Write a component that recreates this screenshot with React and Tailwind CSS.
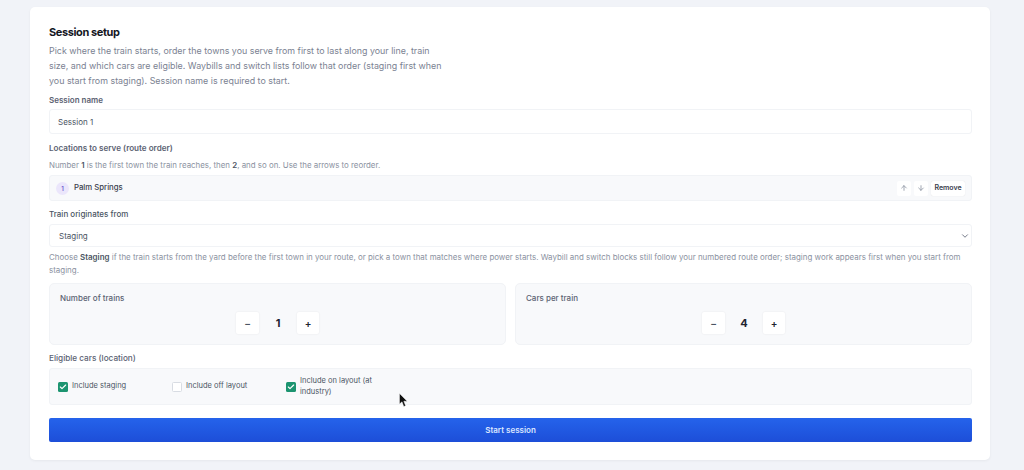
import { ChevronDown, ArrowUp, ArrowDown, Check } from "lucide-react";

function Stepper({ label, value }) {
  return (
    <div className="flex-1 h-[62px] bg-[#f8f9fb] border border-[#f1f3f6] rounded-[5px] px-[10px] pt-[8px]">
      <div className="text-[8px] leading-[12px] font-medium text-[#5b6272]">{label}</div>
      <div className="flex items-center justify-center mt-[8px]">
        <button className="w-[23px] h-[22px] bg-white rounded-[2px] shadow-[0_0_2px_rgba(0,0,0,0.08)] text-[10px] font-semibold text-[#4b5563]">−</button>
        <span className="w-[38px] text-center text-[11px] font-bold text-[#1f2430]">{value}</span>
        <button className="w-[22px] h-[22px] bg-white rounded-[2px] shadow-[0_0_2px_rgba(0,0,0,0.08)] text-[10px] font-semibold text-[#1f2430]">+</button>
      </div>
    </div>
  );
}

function Box({ checked }) {
  return checked ? (
    <span className="w-[10px] h-[10px] shrink-0 rounded-[1.5px] bg-[#1c9470] flex items-center justify-center">
      <Check size={8} strokeWidth={3.5} className="text-white" />
    </span>
  ) : (
    <span className="w-[10px] h-[10px] shrink-0 rounded-[1.5px] bg-white border border-[#d8dce3]"></span>
  );
}

export default function App() {
  return (
    <div className="relative w-[1024px] h-[470px] overflow-hidden bg-[#f1f3f8] pt-[7px] pl-[30px] font-['Inter',sans-serif]">
      <div className="w-[960px] h-[453px] bg-white rounded-[5px] shadow-[0_1px_3px_rgba(0,0,0,0.05)] pl-[19px] pr-[18px] pt-[17px]">
        <h1 className="text-[11px] leading-[16px] font-bold tracking-[-0.4px] text-[#14171f]">Session setup</h1>
        <p className="mt-[3px] w-[400px] text-[8.9px] leading-[15px] text-[#7b8292]">
          Pick where the train starts, order the towns you serve from first to last along your line, train size, and which cars are eligible. Waybills and switch lists follow that order (staging first when you start from staging). Session name is required to start.
        </p>

        <label className="block mt-[6px] text-[8px] leading-[12px] font-semibold text-[#5b6272]">Session name</label>
        <div className="mt-[3px] h-[25px] border border-[#f1f3f6] rounded-[3px] bg-white px-[8px] flex items-center text-[8px] text-[#4b5563]">Session 1</div>

        <div className="mt-[8px] text-[8.1px] leading-[12px] font-semibold text-[#5b6272]">Locations to serve (route order)</div>
        <p className="mt-[5px] text-[7.9px] leading-[12px] text-[#8b92a1]">
          Number <b className="font-semibold text-[#4b5563]">1</b> is the first town the train reaches, then <b className="font-semibold text-[#4b5563]">2</b>, and so on. Use the arrows to reorder.
        </p>
        <div className="mt-[4px] h-[26px] bg-[#f8f9fb] border border-[#f1f3f6] rounded-[3px] pl-[6px] pr-[6px] flex items-center">
          <span className="w-[13px] h-[13px] rounded-full bg-[#ebe6fb] text-[#6d5bd0] text-[6px] font-semibold flex items-center justify-center">1</span>
          <span className="ml-[5px] text-[7.75px] font-medium text-[#3a404d]">Palm Springs</span>
          <div className="ml-auto flex items-center gap-[3px]">
            <button className="w-[14px] h-[15px] bg-white rounded-[2px] flex items-center justify-center text-[#8f96a3]"><ArrowUp size={8} strokeWidth={2.5} /></button>
            <button className="w-[14px] h-[15px] bg-white rounded-[2px] flex items-center justify-center text-[#8f96a3]"><ArrowDown size={8} strokeWidth={2.5} /></button>
            <button className="w-[34px] h-[15px] bg-white rounded-[2px] shadow-[0_0_1px_rgba(0,0,0,0.15)] text-[7px] font-semibold text-[#3a404d]">Remove</button>
          </div>
        </div>

        <div className="mt-[7px] text-[8px] leading-[12px] font-medium text-[#4b5563]">Train originates from</div>
        <div className="mt-[4px] h-[23px] border border-[#f1f3f6] rounded-[3px] bg-white pl-[9px] pr-[1px] flex items-center justify-between text-[8px] text-[#4b5563]">
          Staging
          <ChevronDown size={10} className="text-[#5b6272]" />
        </div>
        <p className="mt-[4px] text-[7.95px] leading-[13px] text-[#8b92a1]">
          Choose <b className="font-semibold text-[#4b5563]">Staging</b> if the train starts from the yard before the first town in your route, or pick a town that matches where power starts. Waybill and switch blocks still follow your numbered route order; staging work appears first when you start from staging.
        </p>

        <div className="mt-[6px] flex gap-[9px]">
          <Stepper label="Number of trains" value="1" />
          <Stepper label="Cars per train" value="4" />
        </div>

        <div className="mt-[7px] text-[8.2px] leading-[12px] font-medium text-[#5b6272]">Eligible cars (location)</div>
        <div className="mt-[4px] h-[37px] bg-[#f8f9fb] border border-[#f1f3f6] rounded-[3px] pl-[8px] flex items-center text-[7.5px] leading-[10.5px] text-[#4b5563]">
          <div className="w-[114px] flex items-center gap-[4px]"><Box checked />Include staging</div>
          <div className="w-[114px] flex items-center gap-[4px]"><Box />Include off layout</div>
          <div className="w-[90px] flex items-center gap-[4px]"><Box checked />Include on layout (at industry)</div>
        </div>

        <button className="mt-[13px] w-full h-[24px] rounded-[2px] bg-gradient-to-b from-[#2563eb] to-[#1d4ed8] text-[8px] font-semibold text-[#dbe6ff]">Start session</button>
      </div>

      {/* mouse pointer */}
      <svg className="absolute left-[399px] top-[393px]" width="9" height="15" viewBox="0 0 9 15">
        <path d="M0.5 0.5V11L3 8.8L4.8 13.5L6.6 12.7L4.8 8.2H8.2Z" fill="#111" stroke="#fff" strokeWidth="0.4" />
      </svg>
    </div>
  );
}
